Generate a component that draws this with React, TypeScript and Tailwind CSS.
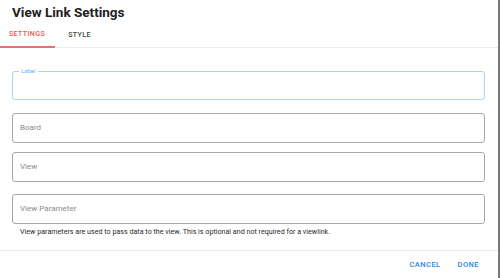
export default function App() {
  return (
    <div className="flex h-[278px] w-[500px] overflow-hidden bg-white font-['Roboto',sans-serif]">
      <div className="flex min-w-0 flex-1 flex-col">
        {/* Header */}
        <div className="h-[22px] pl-3 pt-[2px]">
          <h1 className="text-[13.5px] font-bold leading-[20px] text-[#212121]">View Link Settings</h1>
        </div>

        {/* Tabs */}
        <div className="flex h-[26px] border-b border-[#ebebeb]">
          <div className="-mb-px flex h-[26px] w-[55px] items-center justify-center border-b-2 border-[#e57373] pt-[1px] pr-[1px] text-[7px] font-medium tracking-[0.06em] text-[#ef5350]">
            SETTINGS
          </div>
          <div className="flex h-[25px] w-[49px] items-center justify-center pt-[2px] text-[7px] font-medium tracking-[0.06em] text-[#424242]">
            STYLE
          </div>
        </div>

        {/* Fields */}
        <div className="pl-3 pr-[13px]">
          <div className="relative mt-[23px] h-[29px] rounded-[3px] border border-[#a9d3f7]">
            <span className="absolute left-[6px] top-[-5px] bg-white px-[2px] text-[6px] leading-[8px] text-[#64b5f6]">
              Label
            </span>
          </div>
          <div className="mt-[13px] flex h-[30px] items-center rounded-[3px] border border-[#a8a8a8] pl-[7px] text-[8px] text-[#8a8a8a]">
            Board
          </div>
          <div className="mt-[9px] flex h-[30px] items-center rounded-[3px] border border-[#a8a8a8] pl-[7px] text-[8px] text-[#8a8a8a]">
            View
          </div>
          <div className="mt-[12px] flex h-[30px] items-center rounded-[3px] border border-[#a8a8a8] pl-[7px] text-[8px] text-[#8a8a8a]">
            View Parameter
          </div>
          <p className="mt-[4px] pl-2 text-[7.15px] leading-[8px] text-[#2a2a2a]">
            View parameters are used to pass data to the view. This is optional and not required for a viewlink.
          </p>
        </div>

        {/* Footer */}
        <div className="mt-[14px] border-t border-[#ebebeb]">
          <div className="flex h-[28px] items-center justify-end gap-[17px] pr-[19px]">
            <button className="text-[7.5px] font-medium tracking-[0.06em] text-[#1e88e5]">CANCEL</button>
            <button className="text-[7.5px] font-medium tracking-[0.06em] text-[#1e88e5]">DONE</button>
          </div>
        </div>
      </div>
      <div className="w-[2px] bg-[#7a7a7a]" />
    </div>
  );
}
